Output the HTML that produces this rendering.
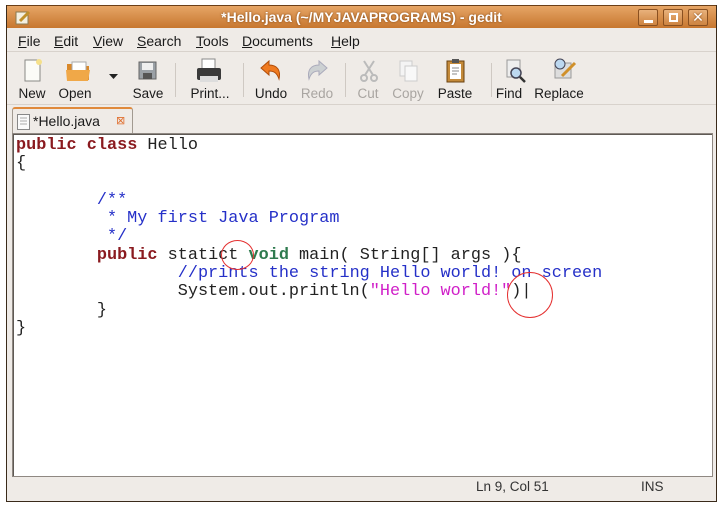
<!DOCTYPE html>
<html><head><style>
*{margin:0;padding:0;box-sizing:border-box}
body{width:720px;height:511px;background:#fff;position:relative;overflow:hidden;font-family:"Liberation Sans","DejaVu Sans",sans-serif;font-size:13px;color:#1a1a1a}
.win{position:absolute;left:6px;top:5px;width:711px;height:497px;background:#efebe7;border:1px solid #3a2a1a;border-top:none}
.title{position:absolute;left:0;top:0;width:709px;height:23px;background:linear-gradient(#e6a566,#c7772f);border-top:1px solid #6b3f17;color:#fff;font-weight:bold;font-size:14px;text-align:center;line-height:22px;text-shadow:0 0 2px #7a4010}
.btn{position:absolute;top:3px;width:20px;height:17px;border:1px solid #8a5020;background:linear-gradient(#e9b27c,#cd8340);border-radius:2px}
.menu{position:absolute;top:23px;left:0;width:709px;height:24px;border-bottom:1px solid #d8d2cc}
.menu span{position:absolute;top:5px;font-size:14px}
.tb{position:absolute;top:48px;left:0;width:709px;height:52px;border-bottom:1px solid #d8d2cc}
.tb .l{position:absolute;top:33px;font-size:13.5px;transform:translateX(-50%);white-space:nowrap}
.tb .d{color:#a9a5a1}
.sep{position:absolute;top:10px;width:1px;height:34px;background:#cfc9c3}
.ic{position:absolute}
.tab{position:absolute;left:5px;top:102px;width:121px;height:28px;border:1px solid #a29a91;border-bottom:none;border-top:2px solid #e08a3c;background:#efebe7;border-radius:3px 3px 0 0;font-size:14px;line-height:24px;padding-left:20px}
.ed{position:absolute;left:5px;top:128px;width:701px;height:344px;background:#fff;border:1px solid #8f8882;box-shadow:inset 1px 1px 0 #5f5a55}
pre{position:absolute;left:3px;top:3px;font-family:"Liberation Mono",monospace;font-size:16.85px;line-height:18.3px;color:#222}
.k{color:#8a1a1f;font-weight:bold}.g{color:#2e7a4e;font-weight:bold}.c{color:#2530c8}.s{color:#d020c8}
.st{position:absolute;top:474px;font-size:13.5px;color:#333}
.circ{position:absolute;border:1.2px solid #e43030;border-radius:50%}
</style></head><body>
<div class="win">
<div class="title">*Hello.java (~/MYJAVAPROGRAMS) - gedit
<svg style="position:absolute;left:8px;top:4px" width="16" height="15"><rect x="1" y="2" width="12" height="12" fill="#f4efe0" stroke="#8a7a50"/><path d="M5 11 L14 2" stroke="#c0902a" stroke-width="3"/></svg>
<div class="btn" style="left:631px"><div style="position:absolute;left:5px;top:10px;width:9px;height:3px;background:#fff"></div></div>
<div class="btn" style="left:656px"><div style="position:absolute;left:5px;top:3px;width:9px;height:9px;border:2px solid #fff"></div></div>
<div class="btn" style="left:681px;color:#fff;font-size:14px;line-height:15px;text-align:center">✕</div>
</div>
<div class="menu">
<span style="left:11px"><u>F</u>ile</span><span style="left:47px"><u>E</u>dit</span><span style="left:86px"><u>V</u>iew</span><span style="left:130px"><u>S</u>earch</span><span style="left:189px"><u>T</u>ools</span><span style="left:235px"><u>D</u>ocuments</span><span style="left:324px"><u>H</u>elp</span>
</div>
<div class="tb">
<svg class="ic" style="left:16px;top:6px" width="20" height="24"><rect x="2" y="1" width="15" height="21" fill="#fbfbf7" stroke="#8a8a86"/><circle cx="16" cy="3" r="3" fill="#f5e08a"/></svg>
<svg class="ic" style="left:57px;top:6px" width="30" height="24"><path d="M3 5h8l2 2h12v14H3z" fill="#d9882a"/><rect x="8" y="3" width="14" height="10" fill="#fff" stroke="#aaa"/><path d="M2 11h24l-2 11H3z" fill="#f0a848"/></svg>
<svg class="ic" style="left:102px;top:21px" width="10" height="6"><path d="M0 0h9l-4.5 5z" fill="#222"/></svg>
<svg class="ic" style="left:131px;top:8px" width="20" height="20"><rect x="1" y="1" width="17" height="17" fill="#9aa0a6" stroke="#666"/><rect x="4" y="2" width="11" height="7" fill="#eee"/><rect x="5" y="12" width="9" height="6" fill="#555"/></svg>
<div class="sep" style="left:168px"></div>
<svg class="ic" style="left:188px;top:5px" width="28" height="26"><rect x="7" y="1" width="13" height="10" fill="#fff" stroke="#888"/><rect x="2" y="10" width="24" height="12" rx="2" fill="#3a3a3a"/><rect x="5" y="18" width="18" height="6" fill="#ddd"/></svg>
<div class="sep" style="left:236px"></div>
<svg class="ic" style="left:251px;top:7px" width="26" height="22"><path d="M3 8 L11 1 L11 5 C19 5 23 10 21 19 C19 13 16 11 11 11 L11 15 Z" fill="#ef7a20" stroke="#b04c08"/></svg>
<svg class="ic" style="left:297px;top:7px" width="26" height="22"><path d="M23 8 L15 1 L15 5 C7 5 3 10 5 19 C7 13 10 11 15 11 L15 15 Z" fill="#ccd0d2" stroke="#aab"/></svg>
<div class="sep" style="left:338px"></div>
<svg class="ic" style="left:351px;top:6px" width="22" height="24"><path d="M6 2 L15 16 M16 2 L7 16" stroke="#bbb" stroke-width="2"/><circle cx="6" cy="19" r="3" fill="none" stroke="#bbb" stroke-width="2"/><circle cx="16" cy="19" r="3" fill="none" stroke="#bbb" stroke-width="2"/></svg>
<svg class="ic" style="left:391px;top:6px" width="22" height="24"><rect x="2" y="2" width="12" height="15" fill="#f4f4f4" stroke="#ccc"/><rect x="7" y="7" width="12" height="15" fill="#f8f8f8" stroke="#ccc"/></svg>
<svg class="ic" style="left:438px;top:5px" width="22" height="26"><rect x="2" y="3" width="17" height="21" fill="#c48a3a" stroke="#6a4210"/><rect x="5" y="6" width="11" height="15" fill="#fff"/><rect x="7" y="1" width="7" height="4" fill="#555"/><path d="M7 10h7M7 13h7M7 16h5" stroke="#888"/></svg>
<div class="sep" style="left:484px"></div>
<svg class="ic" style="left:498px;top:6px" width="22" height="24"><rect x="2" y="1" width="13" height="17" fill="#eee" stroke="#999"/><circle cx="11" cy="14" r="5" fill="#bcd8f0" stroke="#445" stroke-width="1.5"/><path d="M15 18 L20 23" stroke="#333" stroke-width="2.5"/></svg>
<svg class="ic" style="left:545px;top:5px" width="26" height="24"><rect x="3" y="5" width="16" height="15" fill="#ddd" stroke="#999"/><circle cx="8" cy="6" r="5" fill="#bcd8f0" stroke="#445"/><path d="M10 18 L23 5" stroke="#d0902a" stroke-width="3"/></svg>
<span class="l" style="left:25px">New</span><span class="l" style="left:68px">Open</span><span class="l" style="left:141px">Save</span><span class="l" style="left:203px">Print...</span><span class="l" style="left:264px">Undo</span><span class="l d" style="left:310px">Redo</span><span class="l d" style="left:361px">Cut</span><span class="l d" style="left:401px">Copy</span><span class="l" style="left:448px">Paste</span><span class="l" style="left:502px">Find</span><span class="l" style="left:552px">Replace</span>
</div>
<div class="tab">
<svg style="position:absolute;left:4px;top:5px" width="13" height="16"><rect x="0.5" y="0.5" width="12" height="15" fill="#fafafa" stroke="#888"/><path d="M3 4h7M3 7h7M3 10h7" stroke="#aaa"/></svg>
*Hello.java
<span style="position:absolute;left:103px;top:0;color:#e07030;font-size:11px">⊠</span>
</div>
<div class="ed">
<pre><span class="k">public</span> <span class="k">class</span> Hello
{

        <span class="c">/**</span>
<span class="c">         * My first Java Program</span>
<span class="c">         */</span>
        <span class="k">public</span> statict <span class="g">void</span> main( String[] args ){
                <span class="c">//prints the string Hello world! on screen</span>
                System.out.println(<span class="s">"Hello world!"</span>)|
        }
}</pre>
</div>
<span class="st" style="left:469px">Ln 9, Col 51</span>
<span class="st" style="left:634px">INS</span>
</div>
<div class="circ" style="left:221px;top:240px;width:33px;height:30px"></div>
<div class="circ" style="left:507px;top:272px;width:46px;height:46px"></div>
</body></html>
